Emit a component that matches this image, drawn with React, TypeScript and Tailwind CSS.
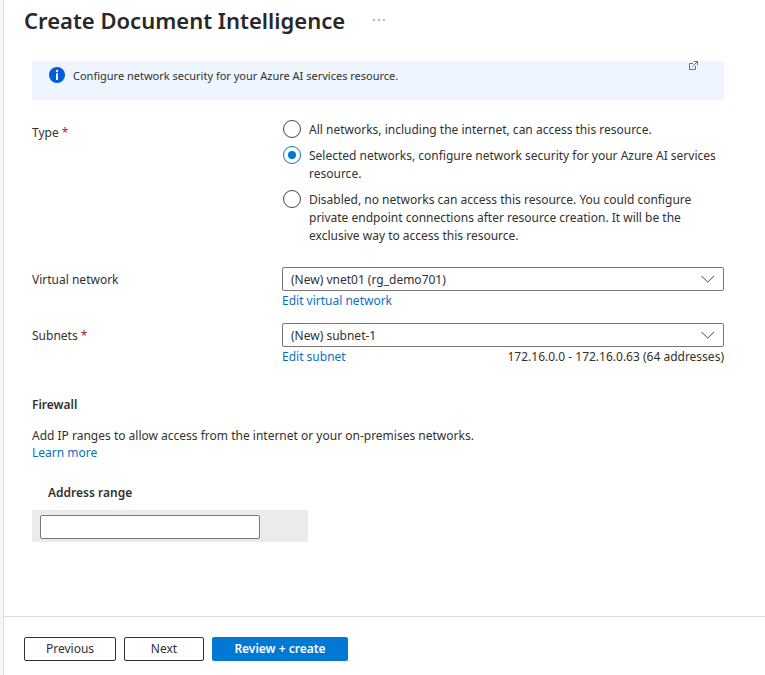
import type { ReactNode } from "react";

const accessTypes = [
  "All networks, including the internet, can access this resource.",
  "Selected networks, configure network security for your Azure AI services resource.",
  "Disabled, no networks can access this resource. You could configure private endpoint connections after resource creation. It will be the exclusive way to access this resource.",
];

function Required() {
  return <span className="text-[#a4262c]">*</span>;
}

function Dropdown({ id, value }: { id: string; value: string }) {
  return (
    <div className="grid">
      <select
        id={id}
        defaultValue={value}
        className="col-start-1 row-start-1 h-6 w-full appearance-none rounded-xs border border-[#7a7876] bg-white pt-[2px] pr-8 pl-2 text-[#323130]"
      >
        <option value={value}>{value}</option>
      </select>
      <svg
        className="pointer-events-none col-start-1 row-start-1 mr-2 h-4 w-4 self-center justify-self-end"
        viewBox="0 0 16 16"
        fill="none"
        stroke="#484644"
        strokeWidth="1"
        aria-hidden="true"
      >
        <path d="M1.500 5l6.200 6.200L13.900 5" />
      </svg>
    </div>
  );
}

function Link({ children }: { children: ReactNode }) {
  return (
    <a href="#" className="text-[#0b6fc4] hover:underline">
      {children}
    </a>
  );
}

export default function App() {
  return (
    <div className="flex min-h-screen bg-[#f6f6f6] pl-[3px] font-['Noto_Sans','Open_Sans',sans-serif] text-[12px] leading-[18px] text-[#323130]">
      <div className="flex flex-1 flex-col border-l border-[#dfdfdf] bg-white">
        <header className="flex items-center gap-[26px] pt-1 pl-5">
          <h1 className="text-[22px] leading-8 font-semibold text-[#292827]">
            Create Document Intelligence
          </h1>
          <button type="button" aria-label="More options" className="flex h-6 w-4 items-center justify-center">
            <svg width="14" height="4" viewBox="0 0 14 4" fill="#605e5c" aria-hidden="true">
              <circle cx="2" cy="2" r="0.8" />
              <circle cx="7" cy="2" r="0.8" />
              <circle cx="12" cy="2" r="0.8" />
            </svg>
          </button>
        </header>

        <main className="flex-1 pt-[25px] pr-[41px] pb-8 pl-7">
          <div className="flex h-[39px] items-start bg-[#eff5ff] pl-[17px] pr-[26px]">
            <svg className="mt-[6px] h-4 w-4" viewBox="0 0 16 16" aria-hidden="true">
              <circle cx="8" cy="8" r="8" fill="#015cda" />
              <circle cx="8" cy="4" r="1.200" fill="#fff" />
              <rect x="7" y="6.300" width="2" height="6.700" fill="#fff" />
            </svg>
            <p className="mt-[6px] ml-2 flex-1 text-[11px]">
              Configure network security for your Azure AI services resource.
            </p>
            <a href="#" aria-label="Open network security documentation">
              <svg
                width="9"
                height="9"
                viewBox="0 0 9 9"
                fill="none"
                stroke="#6b6f80"
                strokeWidth="1"
                aria-hidden="true"
              >
                <path d="M4 2.500H0.500v6h6V5M5 0.500h3.500V4M8.500 0.500L3.500 5.500" />
              </svg>
            </a>
          </div>

          <fieldset className="mt-[21px] flex" aria-labelledby="type-label">
            <div id="type-label" className="w-[250px] shrink-0 pt-[3px]">
              Type <Required />
            </div>
            <div className="flex flex-1 flex-col gap-2">
              {accessTypes.map((text, i) => (
                <label key={text} className="flex items-start gap-2">
                  <input
                    type="radio"
                    name="access"
                    defaultChecked={i === 1}
                    className="-mt-px ml-px grid h-[18px] w-[18px] shrink-0 appearance-none place-content-center rounded-full border border-[#484644] bg-white checked:border-[#0078d4] checked:before:h-2 checked:before:w-2 checked:before:rounded-full checked:before:bg-[#0078d4]"
                  />
                  <span>{text}</span>
                </label>
              ))}
            </div>
          </fieldset>

          <div className="mt-[22px] flex">
            <label htmlFor="vnet" className="w-[250px] shrink-0 pt-1">
              Virtual network
            </label>
            <div className="flex-1">
              <Dropdown id="vnet" value="(New) vnet01 (rg_demo701)" />
              <div className="pt-px">
                <Link>Edit virtual network</Link>
              </div>
            </div>
          </div>

          <div className="mt-[13px] flex">
            <label htmlFor="subnet" className="w-[250px] shrink-0 pt-1">
              Subnets <Required />
            </label>
            <div className="flex-1">
              <Dropdown id="subnet" value="(New) subnet-1" />
              <div className="flex justify-between pt-px">
                <Link>Edit subnet</Link>
                <span>172.16.0.0 - 172.16.0.63 (64 addresses)</span>
              </div>
            </div>
          </div>

          <h2 className="mt-[30px] font-semibold">Firewall</h2>
          <p className="mt-[13px] leading-[17px]">
            Add IP ranges to allow access from the internet or your on-premises networks.
            <br />
            <Link>Learn more</Link>
          </p>

          <table className="mt-[23px] w-[276px]">
            <thead>
              <tr>
                <th scope="col" id="address-range" className="pb-2 pl-4 text-left font-semibold">
                  Address range
                </th>
              </tr>
            </thead>
            <tbody>
              <tr className="bg-[#ebebea]">
                <td className="pt-[5px] pb-[3px] pl-2">
                  <input
                    type="text"
                    aria-labelledby="address-range"
                    className="block h-6 w-[220px] rounded-xs border border-[#7a7876] bg-white px-2"
                  />
                </td>
              </tr>
            </tbody>
          </table>
        </main>

        <footer className="flex gap-2 border-t border-[#dcdcdc] pt-5 pb-[14px] pl-5">
          <button type="button" className="h-6 w-[92px] rounded-xs border border-[#323130] bg-white">
            Previous
          </button>
          <button type="button" className="h-6 w-20 rounded-xs border border-[#323130] bg-white">
            Next
          </button>
          <button type="button" className="h-6 w-[136px] rounded-xs bg-[#0078d4] font-semibold text-white">
            Review + create
          </button>
        </footer>
      </div>
    </div>
  );
}
